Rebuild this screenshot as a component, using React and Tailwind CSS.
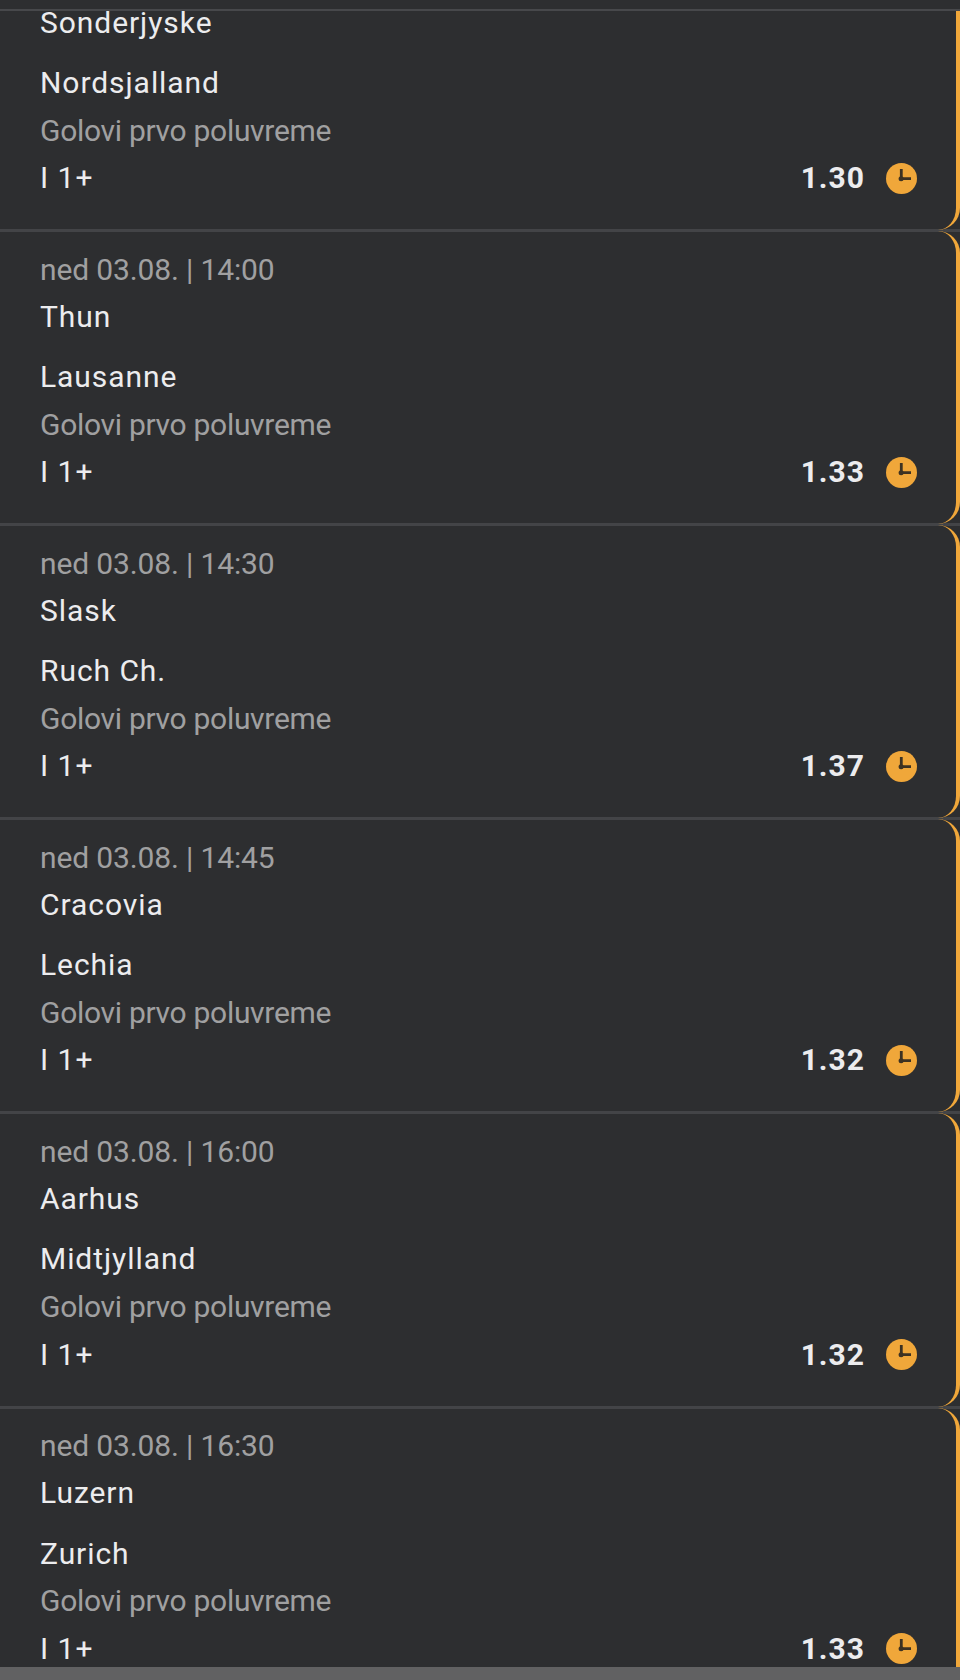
import { clsx } from "clsx";

const matches = [
  { time: "13:00", home: "Sonderjyske", away: "Nordsjalland", odd: "1.30" },
  { time: "14:00", home: "Thun", away: "Lausanne", odd: "1.33" },
  { time: "14:30", home: "Slask", away: "Ruch Ch.", odd: "1.37" },
  { time: "14:45", home: "Cracovia", away: "Lechia", odd: "1.32" },
  { time: "16:00", home: "Aarhus", away: "Midtjylland", odd: "1.32" },
  { time: "16:30", home: "Luzern", away: "Zurich", odd: "1.33" },
];

function PendingIcon() {
  return (
    <svg className="mt-px" width="31" height="31" viewBox="0 0 31 31" fill="none">
      <circle cx="15.5" cy="15.5" r="15.5" fill="#f0a73a" />
      <path d="M15.3 6V15.6H25" stroke="#3d3222" strokeWidth="2.8" />
      <circle cx="15.1" cy="15.8" r="2.5" fill="#3d3222" />
    </svg>
  );
}

function MatchRow({ match, first, last }) {
  return (
    <div
      className={clsx(
        "shrink-0 flex flex-col border-[#434447]",
        first && "h-[221px] border-b-[3px]",
        last && "h-[259px]",
        !first && !last && "h-[294.15px] border-b-[3px]"
      )}
    >
      <div
        className={clsx(
          "relative flex-1 border-r-4 border-[#f0a73a] pl-10 pr-[39px] flex flex-col",
          first && "rounded-br-[22px] -mb-px",
          last && "rounded-tr-[22px] -mt-px pt-[14.5px]",
          !first && !last && "rounded-r-[22px] -my-px pt-[14.5px]"
        )}
      >
        {!first && (
          <p className="text-[#a0a0a1] tracking-[-0.14px]">ned 03.08. | {match.time}</p>
        )}
        <p className={clsx("tracking-[0.94px]", first && "leading-[23px] mb-[11.5px]")}>
          {match.home}
        </p>
        <p className="mt-[13.5px] tracking-[0.94px]">{match.away}</p>
        <p className="mt-[0.75px] text-[#a0a0a1] tracking-[-0.3px]">Golovi prvo poluvreme</p>
        <div className="mt-[0.4px] flex items-center justify-between">
          <span className="tracking-[1px]">I 1+</span>
          <div className="flex items-center gap-[21px]">
            <span className="font-bold tracking-[1px]">{match.odd}</span>
            <PendingIcon />
          </div>
        </div>
      </div>
    </div>
  );
}

export default function App() {
  return (
    <div className="w-[960px] h-[1680px] flex flex-col bg-[#2d2e30] font-['Roboto',sans-serif] text-[30px] leading-[47px] text-[#ececee]">
      <div className="h-[11px] shrink-0 border-b-2 border-[#47484b]" />
      <div className="flex-1 min-h-0 flex flex-col">
        {matches.map((match, i) => (
          <MatchRow
            key={match.home}
            match={match}
            first={i === 0}
            last={i === matches.length - 1}
          />
        ))}
      </div>
      <div className="relative h-[13px] shrink-0 bg-[#616162]" />
    </div>
  );
}
